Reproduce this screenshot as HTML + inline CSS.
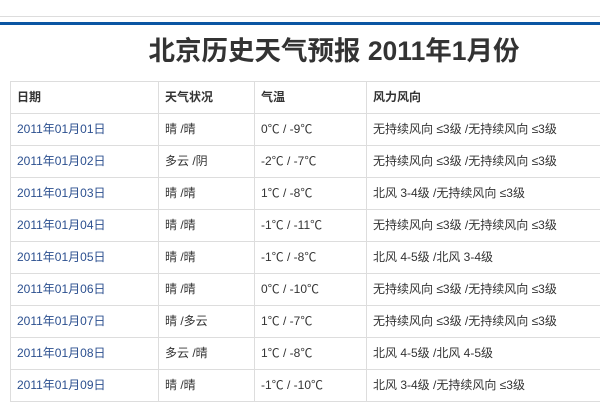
<!DOCTYPE html>
<html><head><meta charset="utf-8"><style>
body{margin:0;width:600px;height:400px;overflow:hidden;background:#fff;font-family:"Liberation Sans","Noto Sans CJK SC",sans-serif;position:relative}
.g{position:absolute;left:0;top:16px;width:600px;height:1px;background:#ddd}
.b{position:absolute;left:0;top:22px;width:600px;height:3px;background:#0a56a3}
h1{position:absolute;left:0;top:33px;width:668px;margin:0;text-align:center;font-size:26.5px;line-height:36px;color:#333;font-weight:bold}
table{position:absolute;left:10px;top:81px;border-collapse:collapse;font-size:12px;color:#333;table-layout:fixed;width:620px}
td{border:1px solid #ddd;height:32px;padding:0 0 0 6px;box-sizing:border-box;line-height:31px;white-space:nowrap;overflow:hidden}
tr:first-child td{font-weight:bold}
td.d{color:#2b4f8f}
</style></head><body>
<div class="g"></div><div class="b"></div>
<h1>北京历史天气预报 2011年1月份</h1>
<table>
<colgroup><col style="width:148px"><col style="width:96px"><col style="width:112px"><col style="width:264px"></colgroup>
<tr><td>日期</td><td>天气状况</td><td>气温</td><td>风力风向</td></tr>
<tr><td class="d">2011年01月01日</td><td>晴 /晴</td><td>0℃ / -9℃</td><td>无持续风向 ≤3级 /无持续风向 ≤3级</td></tr>
<tr><td class="d">2011年01月02日</td><td>多云 /阴</td><td>-2℃ / -7℃</td><td>无持续风向 ≤3级 /无持续风向 ≤3级</td></tr>
<tr><td class="d">2011年01月03日</td><td>晴 /晴</td><td>1℃ / -8℃</td><td>北风 3-4级 /无持续风向 ≤3级</td></tr>
<tr><td class="d">2011年01月04日</td><td>晴 /晴</td><td>-1℃ / -11℃</td><td>无持续风向 ≤3级 /无持续风向 ≤3级</td></tr>
<tr><td class="d">2011年01月05日</td><td>晴 /晴</td><td>-1℃ / -8℃</td><td>北风 4-5级 /北风 3-4级</td></tr>
<tr><td class="d">2011年01月06日</td><td>晴 /晴</td><td>0℃ / -10℃</td><td>无持续风向 ≤3级 /无持续风向 ≤3级</td></tr>
<tr><td class="d">2011年01月07日</td><td>晴 /多云</td><td>1℃ / -7℃</td><td>无持续风向 ≤3级 /无持续风向 ≤3级</td></tr>
<tr><td class="d">2011年01月08日</td><td>多云 /晴</td><td>1℃ / -8℃</td><td>北风 4-5级 /北风 4-5级</td></tr>
<tr><td class="d">2011年01月09日</td><td>晴 /晴</td><td>-1℃ / -10℃</td><td>北风 3-4级 /无持续风向 ≤3级</td></tr>
</table>
</body></html>
